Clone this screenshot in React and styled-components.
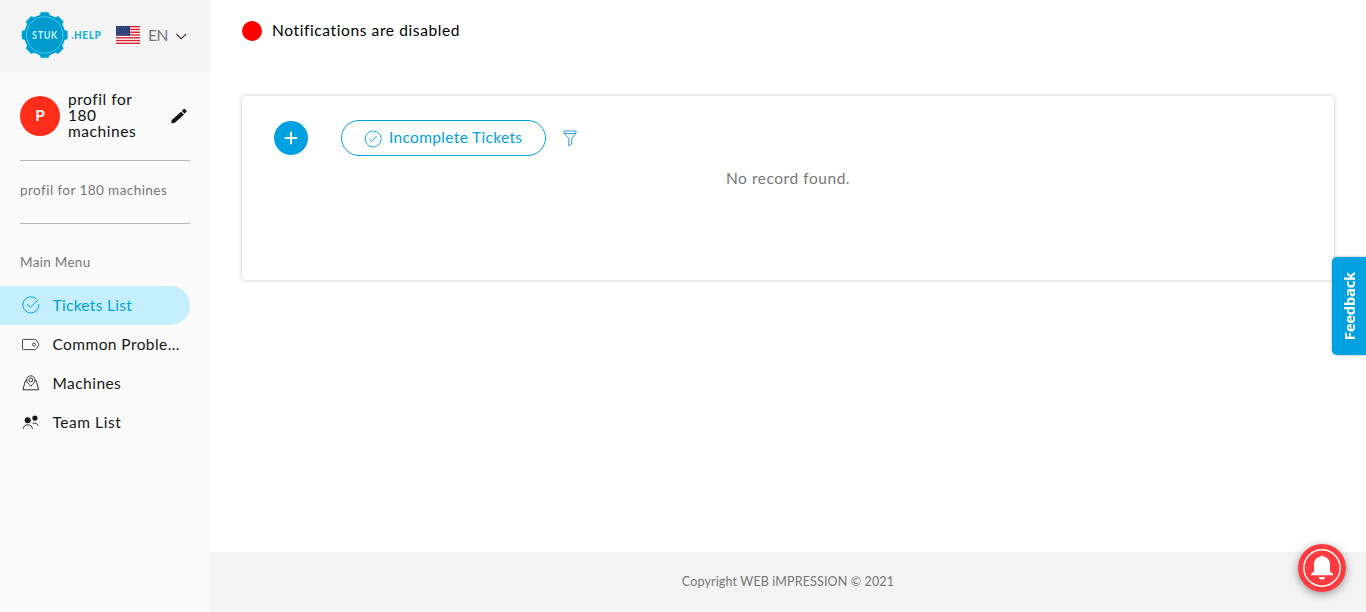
import React from "react";
import styled, { createGlobalStyle } from "styled-components";

const Global = createGlobalStyle`
  * { box-sizing: border-box; }
  body { margin: 0; background: #fff; font-family: Lato, "Liberation Sans", sans-serif; color: #111; overflow: hidden; }
  button { font: inherit; border: 0; padding: 0; background: none; }
  svg { display: block; flex: none; }
`;

const Text = styled.span`
  display: block;
  font-size: ${(p) => p.$size || 15.5}px;
  line-height: 20px;
  padding-bottom: ${(p) => p.$lift ?? 2}px;
  letter-spacing: ${(p) => p.$track || 0}px;
  color: ${(p) => p.$color || "#111"};
  white-space: nowrap;
`;

const Page = styled.div`
  display: flex;
  height: 612px;
`;

const Sidebar = styled.aside`
  width: 210px;
  flex: none;
  background: #fafafa;
`;

const Brand = styled.header`
  height: 72px;
  background: #f4f4f4;
  display: flex;
  align-items: center;
  padding: 0 0 2px 20px;
`;

const Language = styled.button`
  display: flex;
  align-items: center;
  margin-left: 12px;
  gap: 8px;
`;

const Profile = styled.section`
  margin: 0 20px;
  height: 89px;
  display: flex;
  align-items: center;
  border-bottom: 1px solid #b9b9b9;
`;

const Avatar = styled.div`
  width: 40px;
  height: 40px;
  flex: none;
  border-radius: 50%;
  background: #ff2d1a;
  color: #fff;
  font-weight: 700;
  font-size: 15.5px;
  line-height: 38px;
  text-align: center;
`;

const ProfileName = styled.div`
  width: 103px;
  flex: none;
  margin-left: 8px;
  padding: 0 25px 2px 0;
  font-size: 15.5px;
  line-height: 16px;
  letter-spacing: 0.55px;
`;

const Account = styled.section`
  margin: 0 20px;
  height: 63px;
  padding-top: 19px;
  border-bottom: 1px solid #b9b9b9;
`;

const MenuTitle = styled.div`
  padding: 28px 20px 13px;
  height: 62px;
`;

const MenuItem = styled.a`
  display: flex;
  align-items: center;
  width: 190px;
  height: 39px;
  padding-left: 22px;
  gap: 12.5px;
  border-radius: 0 20px 20px 0;
  background: ${(p) => (p.$active ? "#c5efff" : "transparent")};

  svg {
    margin-bottom: 1px;
  }
`;

const Main = styled.main`
  flex: 1;
  display: flex;
  flex-direction: column;
`;

const Status = styled.div`
  display: flex;
  align-items: center;
  gap: 10px;
  height: 41px;
  padding: 21px 32px 0;
`;

const Dot = styled.i`
  width: 20px;
  height: 20px;
  border-radius: 50%;
  background: #f00;
`;

const Card = styled.section`
  margin: 55px 32px 0;
  height: 184px;
  padding: 24px 32px;
  border-radius: 4px;
  box-shadow: 0 0 4px rgba(0, 0, 0, 0.23);
`;

const Toolbar = styled.div`
  display: flex;
  align-items: center;
  height: 36px;
`;

const AddButton = styled.button`
  width: 34px;
  height: 34px;
  border-radius: 50%;
  background: #00a1e0;
  display: grid;
  place-items: center;
`;

const FilterPill = styled.button`
  display: flex;
  align-items: center;
  width: 205px;
  height: 36px;
  margin: 0 17px 0 33px;
  padding-left: 22px;
  gap: 7px;
  border: 1px solid #00a1e0;
  border-radius: 18px;

  svg {
    margin-top: 2px;
  }
`;

const Empty = styled.div`
  text-align: center;
  padding-top: 12px;
`;

const Footer = styled.footer`
  margin-top: auto;
  height: 60px;
  display: flex;
  justify-content: center;
  align-items: center;
  background: #f3f3f3;
`;

const Feedback = styled.button`
  position: fixed;
  right: 0;
  top: 257px;
  width: 34px;
  height: 98px;
  border-radius: 5px 0 0 5px;
  background: #00a1e0;
  box-shadow: 0 0 3px rgba(0, 0, 0, 0.35);
  display: grid;
  place-items: center;
`;

const FeedbackLabel = styled.span`
  writing-mode: vertical-rl;
  transform: rotate(180deg);
  font: 700 15px/20px "Open Sans", sans-serif;
  letter-spacing: -0.35px;
  margin-right: 1px;
  color: #fff;
`;

const Bell = styled.button`
  position: fixed;
  right: 20px;
  bottom: 20px;
  width: 48px;
  height: 48px;
  border-radius: 50%;
  background: #ff3b40;
  box-shadow: 0 2px 8px rgba(0, 0, 0, 0.4);
`;

const Logo = () => (
  <svg width="84" height="48" viewBox="0 0 84 48">
    <g fill="#009bce" stroke="#20c3dc" strokeWidth="0.7">
      {[0, 45, 90, 135].map((a) => (
        <path key={a} transform={`rotate(${a} 24.7 24)`} d="M19.5 5 21 1.3h7.4L29.9 5v38l-1.5 3.7H21L19.5 43z" />
      ))}
    </g>
    <circle cx="24.7" cy="24" r="20.5" fill="#009bce" />
    <circle cx="24.7" cy="24" r="18.3" fill="none" stroke="#43d0e8" strokeWidth="0.9" />
    <text x="12" y="27.8" fill="#c9f3fa" fontFamily="Lato" fontWeight="700" fontSize="10.5" letterSpacing="0.8" textLength="26" lengthAdjust="spacingAndGlyphs">STUK</text>
    <text x="51.2" y="27.8" fill="#10b3d3" fontFamily="Lato" fontWeight="900" fontSize="10.5" letterSpacing="0.6" textLength="30" lengthAdjust="spacingAndGlyphs">.HELP</text>
  </svg>
);

const Flag = () => (
  <svg width="24" height="18" viewBox="0 0 24 18">
    <path fill="#fff" d="M0 0h24v18H0z" />
    {[0, 1, 2, 3, 4, 5, 6].map((i) => (
      <rect key={i} y={i * 2.77} width="24" height="1.38" fill="#d8202f" />
    ))}
    <path fill="#263b70" d="M0 0h14v9.7H0z" />
    <g stroke="#8d9abb" strokeWidth="0.6" strokeDasharray="0.8 1.6">
      <path d="M1 1.5h12M2 3.3h11M1 5.1h12M2 6.900h11M1 8.500h12" />
    </g>
  </svg>
);

const Chevron = () => (
  <svg width="12" height="10" viewBox="0 0 12 10" fill="none" stroke="#4a3030" strokeWidth="1.1">
    <path d="m.3 4 4.900 4.700L10.100 4" />
  </svg>
);

const Pencil = () => (
  <svg width="16" height="16" viewBox="0 0 16 16" fill="#171717">
    <path d="M.5 15.500v-3.200L10 3.700l3 2.900-9.100 8.200zM10.900 2.900 12.700 1q.6-.5 1.200 0l1.500 1.500q.6.6 0 1.200l-1.700 2.100z" />
  </svg>
);

const TaskCheck = () => (
  <svg width="18" height="18" viewBox="0 0 18 18" fill="none" stroke="#00a1e0" strokeWidth="1">
    <path d="M14.400 3.100A8 8 0 1 0 16.800 8M5 8.200l3.300 3L16 4" />
  </svg>
);

const CircleCheck = () => (
  <svg width="18" height="18" viewBox="0 0 18 18" fill="none" stroke="#00a1e0" strokeWidth="0.9">
    <circle cx="9.200" cy="9" r="8" />
    <path d="m5.400 9.300 2.400 2.300 4.800-5.600" />
  </svg>
);

const Tag = () => (
  <svg width="18" height="18" viewBox="0 0 18 18" fill="none" stroke="#333" strokeWidth="0.9">
    <path d="M1.500 4.400h11q1.200 0 2 1l1.800 2.700q.8 1.300 0 2.600l-1.800 2.900q-.8 1-2 1h-11q-1 0-1-1v-8.200q0-1 1-1z" />
    <circle cx="12" cy="9.500" r="1.500" />
  </svg>
);

const MapPin = () => (
  <svg width="18" height="18" viewBox="0 0 18 18" fill="none" stroke="#333" strokeWidth="1">
    <path d="M4.700 6.600H3.400L.9 15.800h15.700L14.200 6.600h-1.300M8.800 12.300C7.200 10.100 4.600 8.500 4.600 6a4.200 4.200 0 0 1 8.400 0c0 2.500-2.600 4.100-4.200 6.300z" />
    <circle cx="8.800" cy="5.900" r="1.900" />
  </svg>
);

const People = () => (
  <svg width="18" height="18" viewBox="0 0 18 18" fill="#171717">
    <circle cx="5.700" cy="7.200" r="3" />
    <circle cx="12.900" cy="5.100" r="2.600" />
    <path d="M1.200 15.800c.2-2.500 2-4 4.600-4s4.300 1.500 4.600 4M10.600 10.400c2.500-.9 4.800.2 5.500 2.300" fill="none" stroke="#333" />
  </svg>
);

const Funnel = () => (
  <svg width="14" height="18" viewBox="0 0 14 18" fill="none" stroke="#1690d0" strokeWidth="0.9">
    <path d="M1 2h12v2.200L8.800 9.500v5.100l-3 2.300V9.500L1 4.200zM1.200 4.500h11.600" />
  </svg>
);

const BellIcon = () => (
  <svg width="48" height="48" viewBox="0 0 48 48" fill="#fff">
    <circle cx="24" cy="24" r="18.200" fill="none" stroke="#fff" strokeWidth="1.400" />
    <path d="M22.500 12.600a1.600 1.600 0 0 1 3 0c4 .8 6.500 3.800 6.500 7.800v7l3 2.700v1.200H13v-1.200l3-2.700v-7c0-4 2.500-7 6.500-7.800zM20.800 33h6.400q-.6 2.800-3.200 2.800T20.800 33z" />
  </svg>
);

const items = [
  { label: "Tickets List", icon: TaskCheck, active: true, track: 0.3 },
  { label: "Common Proble...", icon: Tag, track: 0.42 },
  { label: "Machines", icon: MapPin, track: 0.45 },
  { label: "Team List", icon: People, track: 0.55 },
];

export default function App() {
  return (
    <>
      <Global />
      <Page>
        <Sidebar>
          <Brand>
            <Logo />
            <Language>
              <Flag />
              <Text $size={15.5} $track={-0.4} $lift={0} $color="#777">EN</Text>
              <Chevron />
            </Language>
          </Brand>
          <Profile>
            <Avatar>P</Avatar>
            <ProfileName>profil for 180 machines</ProfileName>
            <Pencil />
          </Profile>
          <Account>
            <Text $size={13.5} $track={0.44} $color="#777">profil for 180 machines</Text>
          </Account>
          <MenuTitle>
            <Text $size={13.5} $track={0.3} $color="#777">Main Menu</Text>
          </MenuTitle>
          <nav>
            {items.map(({ label, icon: Icon, active, track }) => (
              <MenuItem key={label} $active={active}>
                <Icon />
                <Text $track={track} $color={active ? "#00a1e0" : "#171717"}>{label}</Text>
              </MenuItem>
            ))}
          </nav>
        </Sidebar>
        <Main>
          <Status>
            <Dot />
            <Text $track={0.61} $color="#000">Notifications are disabled</Text>
          </Status>
          <Card>
            <Toolbar>
              <AddButton>
                <svg width="14" height="14" viewBox="0 0 14 14" stroke="#fff" strokeWidth="2">
                  <path d="M7 .7v12.600M.7 7h12.600" />
                </svg>
              </AddButton>
              <FilterPill>
                <CircleCheck />
                <Text $track={0.33} $color="#00a1e0">Incomplete Tickets</Text>
              </FilterPill>
              <Funnel />
            </Toolbar>
            <Empty>
              <Text $track={0.54} $color="#777">No record found.</Text>
            </Empty>
          </Card>
          <Footer>
            <Text $size={12.5} $track={0.14} $lift={0} $color="#777">Copyright WEB iMPRESSION © 2021</Text>
          </Footer>
        </Main>
      </Page>
      <Feedback>
        <FeedbackLabel>Feedback</FeedbackLabel>
      </Feedback>
      <Bell aria-label="Notifications">
        <BellIcon />
      </Bell>
    </>
  );
}
